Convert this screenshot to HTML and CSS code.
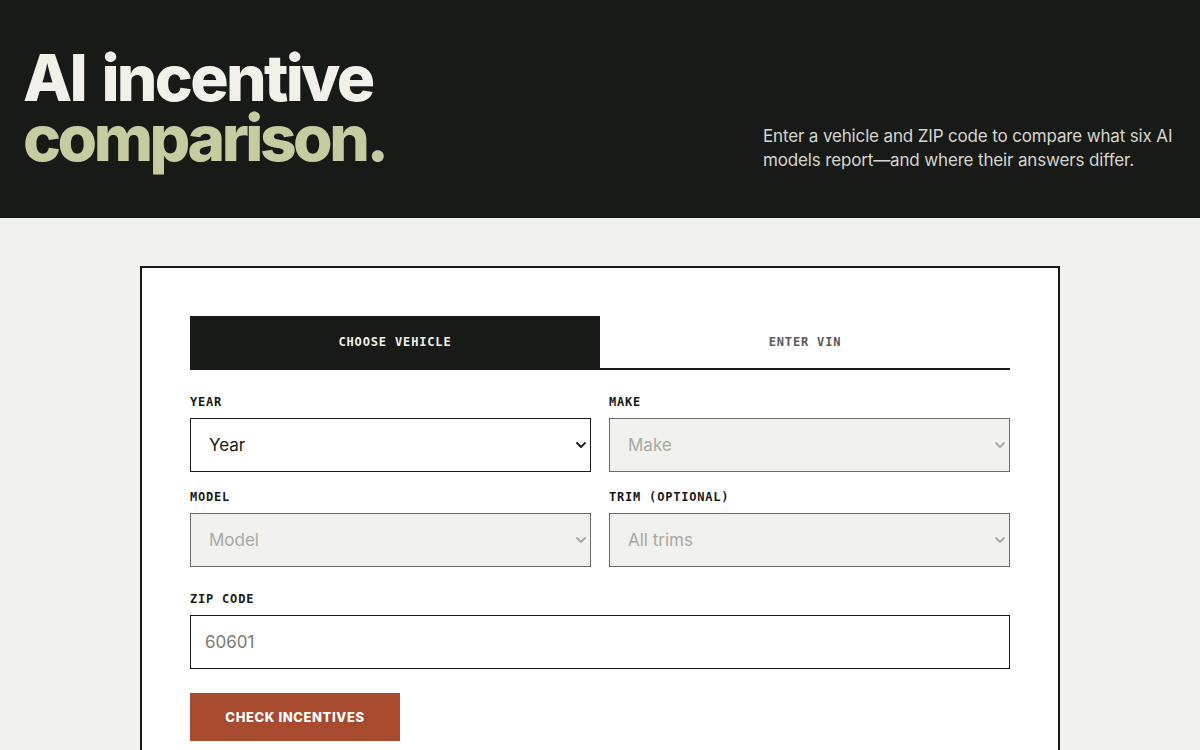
FILE: index.html
```html
<!DOCTYPE html>
<html lang="en">
<head>
<meta charset="utf-8">
<title>AI incentive comparison</title>
<link rel="stylesheet" href="styles.css">
</head>
<body>
<header class="hero">
  <h1 class="hero-title"><span class="t1">AI incentive</span><span class="t2">comparison.</span></h1>
  <p class="hero-sub">Enter a vehicle and ZIP code to compare what six AI models report—and where their answers differ.</p>
</header>
<main class="main">
  <section class="card">
    <div class="tabs">
      <button class="tab active">CHOOSE VEHICLE</button>
      <button class="tab">ENTER VIN</button>
    </div>
    <div class="grid">
      <div class="field">
        <label class="label">YEAR</label>
        <div class="select-wrap">
          <select class="select"><option>Year</option></select>
          <svg class="chev" width="10" height="6" viewBox="0 0 10 6"><path d="M1 1l4 4 4-4" fill="none" stroke="#181a17" stroke-width="1.8" stroke-linecap="round" stroke-linejoin="round"/></svg>
        </div>
      </div>
      <div class="field">
        <label class="label">MAKE</label>
        <div class="select-wrap">
          <select class="select disabled" disabled><option>Make</option></select>
          <svg class="chev" width="10" height="6" viewBox="0 0 10 6"><path d="M1 1l4 4 4-4" fill="none" stroke="#a9a9a4" stroke-width="1.8" stroke-linecap="round" stroke-linejoin="round"/></svg>
        </div>
      </div>
      <div class="field">
        <label class="label">MODEL</label>
        <div class="select-wrap">
          <select class="select disabled" disabled><option>Model</option></select>
          <svg class="chev" width="10" height="6" viewBox="0 0 10 6"><path d="M1 1l4 4 4-4" fill="none" stroke="#a9a9a4" stroke-width="1.8" stroke-linecap="round" stroke-linejoin="round"/></svg>
        </div>
      </div>
      <div class="field">
        <label class="label">TRIM (OPTIONAL)</label>
        <div class="select-wrap">
          <select class="select disabled" disabled><option>All trims</option></select>
          <svg class="chev" width="10" height="6" viewBox="0 0 10 6"><path d="M1 1l4 4 4-4" fill="none" stroke="#a9a9a4" stroke-width="1.8" stroke-linecap="round" stroke-linejoin="round"/></svg>
        </div>
      </div>
    </div>
    <div class="field zip">
      <label class="label">ZIP CODE</label>
      <input class="input" type="text" placeholder="60601">
    </div>
    <button class="submit">CHECK INCENTIVES</button>
  </section>
</main>
</body>
</html>
```
FILE: styles.css
```css
* { box-sizing: border-box; }
html, body { margin: 0; padding: 0; }
body {
  background: #f1f1ed;
  font-family: Inter, "Liberation Sans", sans-serif;
  color: #181a17;
}
.hero {
  background: #181a17;
  height: 218px;
  padding: 0 24px 50px 23px;
  display: flex;
  justify-content: space-between;
  align-items: flex-end;
}
.hero-title {
  margin: 0;
  font-family: Inter, "Liberation Sans", sans-serif;
  font-weight: 800;
  font-size: 64px;
  line-height: 60px;
  letter-spacing: -2.7px;
  word-spacing: 5px;
  display: flex;
  flex-direction: column;
}
.t1 { color: #f1f1ea; }
.t2 { color: #c7cca0; letter-spacing: -3.5px; }
.hero-sub {
  margin: 0 0 -4px 0;
  width: 413px;
  color: #d6d6cf;
  font-size: 17px;
  line-height: 24px;
  letter-spacing: -0.15px;
}
.main {
  padding: 48px 140px 0 140px;
}
.card {
  background: #fff;
  border: 2px solid #181a17;
  border-bottom: none;
  padding: 48px 48px 40px 48px;
}
.tabs {
  display: flex;
  border-bottom: 2px solid #181a17;
}
.tab {
  flex: 1;
  height: 52px;
  border: none;
  background: #fff;
  font-family: "DejaVu Sans Mono", "Liberation Mono", monospace;
  font-weight: bold;
  font-size: 12px;
  letter-spacing: 0.85px;
  color: #5a5a56;
  padding: 0;
}
.tab.active {
  background: #181a17;
  color: #f1f1ea;
}
.grid {
  margin-top: 25px;
  display: grid;
  grid-template-columns: 1fr 1fr;
  column-gap: 18px;
  row-gap: 18px;
}
.label {
  display: block;
  font-family: "DejaVu Sans Mono", "Liberation Mono", monospace;
  font-weight: bold;
  font-size: 12px;
  line-height: 14px;
  letter-spacing: 0.8px;
  color: #181a17;
  margin-bottom: 9px;
}
.select-wrap {
  position: relative;
}
.select {
  -webkit-appearance: none;
  appearance: none;
  width: 100%;
  height: 54px;
  border: 1.5px solid #181a17;
  border-radius: 0;
  background: #fff;
  font-family: Inter, "Liberation Sans", sans-serif;
  font-size: 17px;
  color: #181a17;
  padding: 0 18px;
  margin: 0;
}
.select.disabled {
  background: #f1f1ed;
  border-color: #6b6b68;
  color: #a9a9a4;
  opacity: 1;
}
.chev {
  position: absolute;
  right: 5px;
  top: 24px;
}
.zip {
  margin-top: 25px;
}
.input {
  width: 100%;
  height: 54px;
  border: 1.5px solid #181a17;
  border-radius: 0;
  background: #fff;
  padding: 0 14px;
  font-family: Inter, "Liberation Sans", sans-serif;
  font-size: 17px;
  color: #181a17;
  margin: 0;
  outline: none;
}
.input::placeholder { color: #7a7a76; }
.submit {
  margin-top: 24px;
  width: 210px;
  height: 48px;
  border: none;
  background: #a84a2e;
  color: #fff;
  font-family: Inter, "Liberation Sans", sans-serif;
  font-weight: 800;
  font-size: 13px;
  letter-spacing: 0.6px;
  padding: 0;
}
```
